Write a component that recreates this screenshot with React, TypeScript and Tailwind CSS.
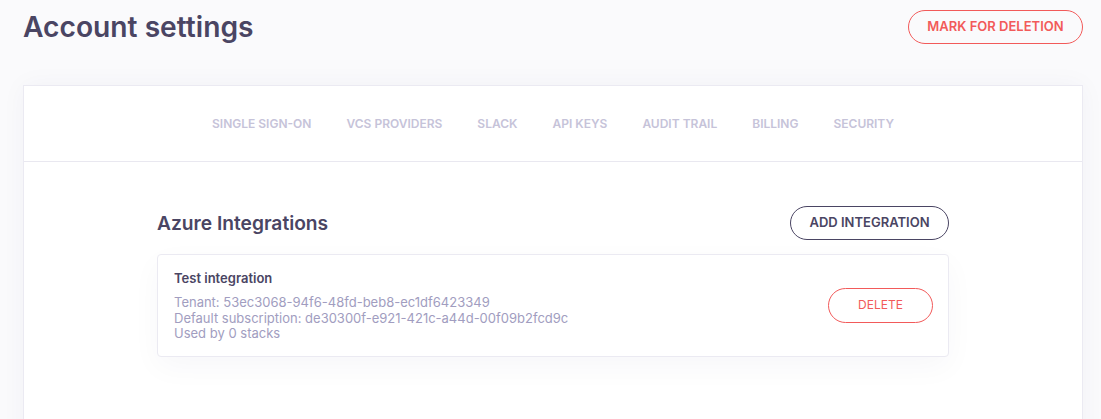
const tabs = ["Single Sign-On", "VCS Providers", "Slack", "API Keys", "Audit Trail", "Billing", "Security"];

const integration = {
  name: "Test integration",
  tenant: "53ec3068-94f6-48fd-beb8-ec1df6423349",
  subscription: "de30300f-e921-421c-a44d-00f09b2fcd9c",
  stacks: 0,
};

export default function App() {
  return (
    <div
      className="flex h-[419px] flex-col overflow-hidden bg-[#fafafc] pl-[23px] pr-[18px] pt-[10px] text-[#4a4563]"
      style={{ fontFamily: "Inter, 'Noto Sans', sans-serif" }}
    >
      <div className="flex items-center justify-between">
        <h1 className="text-[28.2px] font-semibold leading-[34px]">Account settings</h1>
        <button className="h-[34px] w-[175px] rounded-full border border-[#f25a5a] text-[13px] font-semibold text-[#f25a5a]">
          MARK FOR DELETION
        </button>
      </div>

      <div className="mt-[41px] h-[360px] shrink-0 border border-[#ebeaf2] bg-white shadow-[0_0_24px_rgba(40,30,90,0.04)]">
        <nav className="flex h-[76px] items-center justify-center gap-[35px] border-b border-[#e9e8f0]">
          {tabs.map((t) => (
            <span key={t} className="text-[12px] font-semibold uppercase text-[#c6c3d9]">
              {t}
            </span>
          ))}
        </nav>

        <div className="mx-auto w-[792px] pt-[44px]">
          <div className="flex items-center justify-between">
            <h2 className="text-[19.2px] font-semibold leading-[34px]">Azure Integrations</h2>
            <button className="h-[34px] w-[159px] rounded-full border border-[#4a4563] text-[13px] font-semibold">
              ADD INTEGRATION
            </button>
          </div>

          <div className="mt-[14px] flex items-center justify-between rounded-[4px] border border-[#ebeaf2] bg-white pl-[16px] pr-[15px] pt-[14px] pb-[14px] shadow-[0_10px_30px_rgba(40,30,90,0.035)]">
            <div>
              <div className="text-[13px] font-semibold leading-[18px]">{integration.name}</div>
              <div className="mt-[8px] text-[13px] leading-[15.5px] text-[#a19dc0]">
                <div>Tenant: {integration.tenant}</div>
                <div>Default subscription: {integration.subscription}</div>
                <div>Used by {integration.stacks} stacks</div>
              </div>
            </div>
            <button className="h-[35px] w-[105px] rounded-full border border-[#f25a5a] text-[12px] text-[#f25a5a]">
              DELETE
            </button>
          </div>
        </div>
      </div>
    </div>
  );
}
